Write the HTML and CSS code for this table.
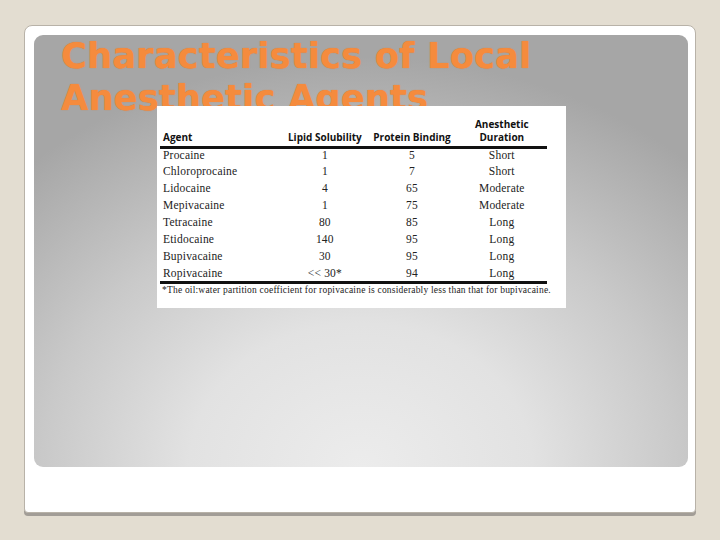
FILE: index.html
```html
<!DOCTYPE html>
<html>
<head>
<meta charset="utf-8">
<link rel="stylesheet" href="styles.css">
</head>
<body>
<div class="slide">
  <div class="panel">
    <h1 class="title">Characteristics of Local<br>Anesthetic Agents</h1>
    <div class="figure">
      <table class="tbl">
        <thead>
          <tr>
            <th class="c-agent">Agent</th>
            <th class="c-lipid">Lipid Solubility</th>
            <th class="c-prot">Protein Binding</th>
            <th class="c-dur">Anesthetic<br>Duration</th>
          </tr>
        </thead>
        <tbody>
          <tr><td class="c-agent">Procaine</td><td>1</td><td>5</td><td>Short</td></tr>
          <tr><td class="c-agent">Chloroprocaine</td><td>1</td><td>7</td><td>Short</td></tr>
          <tr><td class="c-agent">Lidocaine</td><td>4</td><td>65</td><td>Moderate</td></tr>
          <tr><td class="c-agent">Mepivacaine</td><td>1</td><td>75</td><td>Moderate</td></tr>
          <tr><td class="c-agent">Tetracaine</td><td>80</td><td>85</td><td>Long</td></tr>
          <tr><td class="c-agent">Etidocaine</td><td>140</td><td>95</td><td>Long</td></tr>
          <tr><td class="c-agent">Bupivacaine</td><td>30</td><td>95</td><td>Long</td></tr>
          <tr><td class="c-agent">Ropivacaine</td><td>&lt;&lt; 30*</td><td>94</td><td>Long</td></tr>
        </tbody>
      </table>
      <p class="note">*The oil:water partition coefficient for ropivacaine is considerably less than that for bupivacaine.</p>
    </div>
  </div>
</div>
</body>
</html>
```
FILE: styles.css
```css
html, body {
  margin: 0;
  padding: 0;
}
body {
  background: #e3ddd1;
  width: 720px;
  height: 540px;
  overflow: hidden;
}
.slide {
  margin: 25px 0 0 24px;
  width: 672px;
  height: 488px;
  background: #ffffff;
  border: 1px solid #b8b2a8;
  border-radius: 8px 8px 4px 4px;
  box-sizing: border-box;
  padding: 9px 7px 0 9px;
  box-shadow: 0 3px 0 #a29d97;
}
.panel {
  height: 432px;
  border-radius: 9px;
  background:
    radial-gradient(ellipse 75% 95% at 50% 100%, #ececec 0%, #e2e2e2 35%, #c9c9c9 65%, #a6a6a6 100%);
  padding: 0 0 0 27px;
  box-sizing: border-box;
}
.title {
  margin: 0;
  padding-top: 0;
  font-family: "DejaVu Sans", Verdana, sans-serif;
  font-weight: bold;
  font-size: 35px;
  line-height: 42px;
  color: #f58b3d;
  height: 71px;
  letter-spacing: 0.3px;
  text-shadow: 0 0 1px #e07a30;
}
.figure {
  position: relative;
  margin-left: 96px;
  width: 409px;
  height: 202px;
  background: #ffffff;
  box-sizing: border-box;
  padding: 12px 19px 0 3px;
}
.tbl {
  border-collapse: collapse;
  width: 387px;
  font-family: "Liberation Serif", "Times New Roman", serif;
  font-size: 11.5px;
  letter-spacing: 0.2px;
  color: #222;
}
.tbl th {
  font-family: "Open Sans", "DejaVu Sans", sans-serif;
  font-weight: bold;
  font-size: 10px;
  letter-spacing: 0;
  line-height: 13px;
  color: #111;
  padding: 0 0 2px 0;
  border-bottom: 3px solid #111;
  vertical-align: bottom;
  text-align: center;
}
.tbl td {
  height: 17px;
  padding: 0;
  text-align: center;
  line-height: 17px;
}
.tbl .c-agent {
  text-align: left;
  padding-left: 3px;
  width: 120px;
}
.tbl .c-lipid { width: 86px; }
.tbl .c-prot { width: 90px; }
.tbl .c-dur { width: 91px; }
.tbl tbody tr:first-child td { height: 13px; line-height: 13px; padding-bottom: 1px; }
.tbl tbody tr:last-child td { height: 15px; line-height: 15px; border-bottom: 3px solid #111; vertical-align: top; padding-top: 1px; }
.note {
  margin: 1px 0 0 2px;
  font-family: "Liberation Serif", "Times New Roman", serif;
  font-size: 9.5px;
  letter-spacing: 0.2px;
  color: #222;
  white-space: nowrap;
}
```
